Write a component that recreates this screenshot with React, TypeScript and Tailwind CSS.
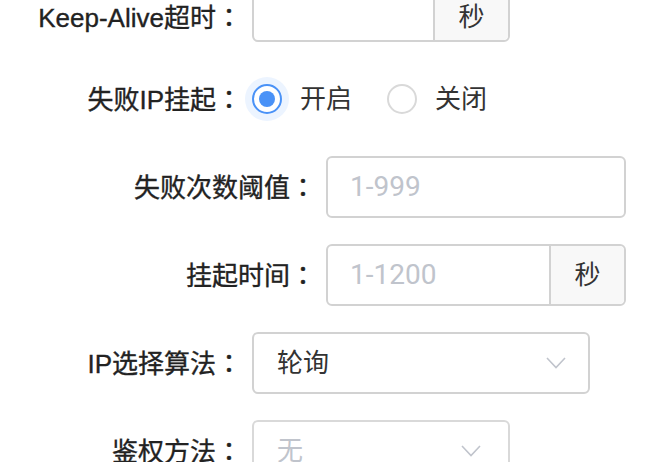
import React from "react";

const FONT = { fontFamily: '"Roboto", "Noto Sans CJK SC", sans-serif' };

// fullwidth colon with centred dots, as in the reference
function Colon() {
  return <span className="font-['Noto_Sans_CJK_TC',sans-serif]">：</span>;
}

function Label({
  text,
  width,
  className = "",
}: {
  text: string;
  width: string;
  className?: string;
}) {
  return (
    <label
      className={`${width} shrink-0 pr-[10px] text-right font-['Liberation_Sans','Noto_Sans_CJK_SC',sans-serif] text-[26px] leading-none text-[#222] [-webkit-text-stroke:0.35px_#222] ${className}`}
    >
      {text}
      <Colon />
    </label>
  );
}

function Chevron() {
  return (
    <svg width="20" height="12" viewBox="0 0 20 12" className="shrink-0">
      <polyline
        points="1,1 10,10.5 19,1"
        fill="none"
        stroke="#c0c4cc"
        strokeWidth="1.6"
      />
    </svg>
  );
}

export default function App() {
  return (
    <div className="h-[462px] w-[672px] overflow-hidden bg-white" style={FONT}>
      <div className="-mt-[20px] flex flex-col gap-[26px]">
        {/* Keep-Alive超时 */}
        <div className="flex h-[62px] items-center">
          <Label text="Keep-Alive超时" width="w-[252px]" className="pt-[12px]" />
          <div className="flex h-[62px] w-[258px] rounded-[6px] border-2 border-[#d2d2d2]">
            <input className="min-w-0 flex-1 bg-transparent px-[24px] text-[26px] outline-none" />
            <div className="flex w-[75px] items-center justify-center rounded-r-[5px] border-l-2 border-[#d2d2d2] bg-[#f8f8f8] pt-[12px] text-[26px] text-[#333]">
              秒
            </div>
          </div>
        </div>

        {/* 失败IP挂起 */}
        <div className="flex h-[62px] items-center">
          <Label text="失败IP挂起" width="w-[252px]" />
          <div className="flex items-center">
            <span className="-ml-[7px] flex h-[44px] w-[44px] items-center justify-center rounded-full bg-[#ecf4ff]">
              <span className="flex h-[30px] w-[30px] items-center justify-center rounded-full border-2 border-[#4a92f7] bg-white">
                <span className="h-[16px] w-[16px] rounded-full bg-[#4a92f7]" />
              </span>
            </span>
            <span className="ml-[11px] text-[26px] text-[#333]">开启</span>
            <span className="ml-[35px] h-[30px] w-[30px] rounded-full border-2 border-[#d9d9d9] bg-white" />
            <span className="ml-[18px] text-[26px] text-[#333]">关闭</span>
          </div>
        </div>

        {/* 失败次数阈值 */}
        <div className="flex h-[62px] items-center">
          <Label text="失败次数阈值" width="w-[326px]" />
          <div className="flex h-[62px] w-[300px] rounded-[6px] border-2 border-[#d2d2d2]">
            <input
              placeholder="1-999"
              className="min-w-0 flex-1 bg-transparent px-[22px] text-[28px] outline-none placeholder:text-[#c0c4cc]"
            />
          </div>
        </div>

        {/* 挂起时间 */}
        <div className="flex h-[62px] items-center">
          <Label text="挂起时间" width="w-[326px]" />
          <div className="flex h-[62px] w-[300px] rounded-[6px] border-2 border-[#d2d2d2]">
            <input
              placeholder="1-1200"
              className="min-w-0 flex-1 bg-transparent px-[22px] text-[28px] outline-none placeholder:text-[#c0c4cc]"
            />
            <div className="flex w-[75px] items-center justify-center rounded-r-[5px] border-l-2 border-[#d2d2d2] bg-[#f8f8f8] text-[26px] text-[#333]">
              秒
            </div>
          </div>
        </div>

        {/* IP选择算法 */}
        <div className="flex h-[62px] items-center">
          <Label text="IP选择算法" width="w-[252px]" />
          <div className="flex h-[62px] w-[338px] items-center justify-between rounded-[6px] border-2 border-[#d2d2d2] pl-[23px] pr-[22px]">
            <span className="text-[26px] text-[#333]">轮询</span>
            <Chevron />
          </div>
        </div>

        {/* 鉴权方法 */}
        <div className="flex h-[62px] items-center">
          <Label text="鉴权方法" width="w-[252px]" />
          <div className="flex h-[62px] w-[258px] items-center justify-between rounded-[6px] border-2 border-[#d9d9d9] pl-[23px] pr-[27px]">
            <span className="text-[26px] text-[#c0c4cc]">无</span>
            <Chevron />
          </div>
        </div>
      </div>
    </div>
  );
}
